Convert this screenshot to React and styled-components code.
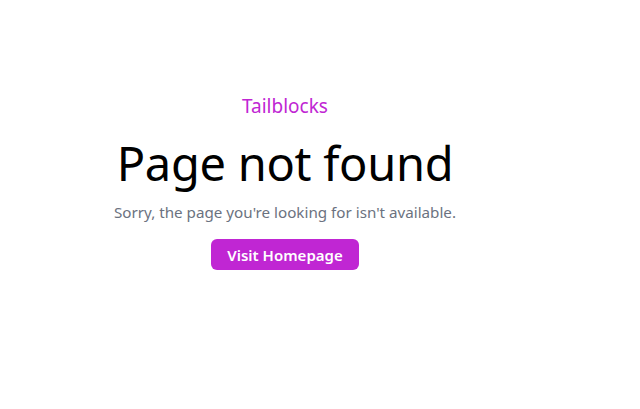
import React from "react";
import styled, { createGlobalStyle } from "styled-components";

const GlobalStyle = createGlobalStyle`
  html, body {
    margin: 0;
    padding: 0;
    background: #ffffff;
    font-family: "Noto Sans", "Open Sans", sans-serif;
  }
`;

const Page = styled.div`
  width: 570px;
  height: 409px;
  display: flex;
  flex-direction: column;
  align-items: center;
  padding-top: 93px;
  box-sizing: border-box;
`;

const Brand = styled.p`
  margin: 0;
  color: #c026d3;
  font-size: 19px;
  line-height: 26px;
`;

const Title = styled.h1`
  margin: 12px 0 0;
  color: #000000;
  font-size: 47px;
  font-weight: 400;
  line-height: 64px;
  letter-spacing: -0.3px;
`;

const Text = styled.p`
  margin: 6px 0 0;
  color: #6b7280;
  font-size: 15.2px;
  line-height: 22px;
`;

const Button = styled.a`
  margin-top: 16px;
  display: inline-flex;
  align-items: center;
  justify-content: center;
  height: 31px;
  padding: 0 16px;
  border-radius: 6px;
  background: #c026d3;
  color: #ffffff;
  font-size: 15px;
  font-weight: 600;
  text-decoration: none;
`;

export default function App() {
  return (
    <>
      <GlobalStyle />
      <Page>
        <Brand>Tailblocks</Brand>
        <Title>Page not found</Title>
        <Text>Sorry, the page you're looking for isn't available.</Text>
        <Button href="#">Visit Homepage</Button>
      </Page>
    </>
  );
}
